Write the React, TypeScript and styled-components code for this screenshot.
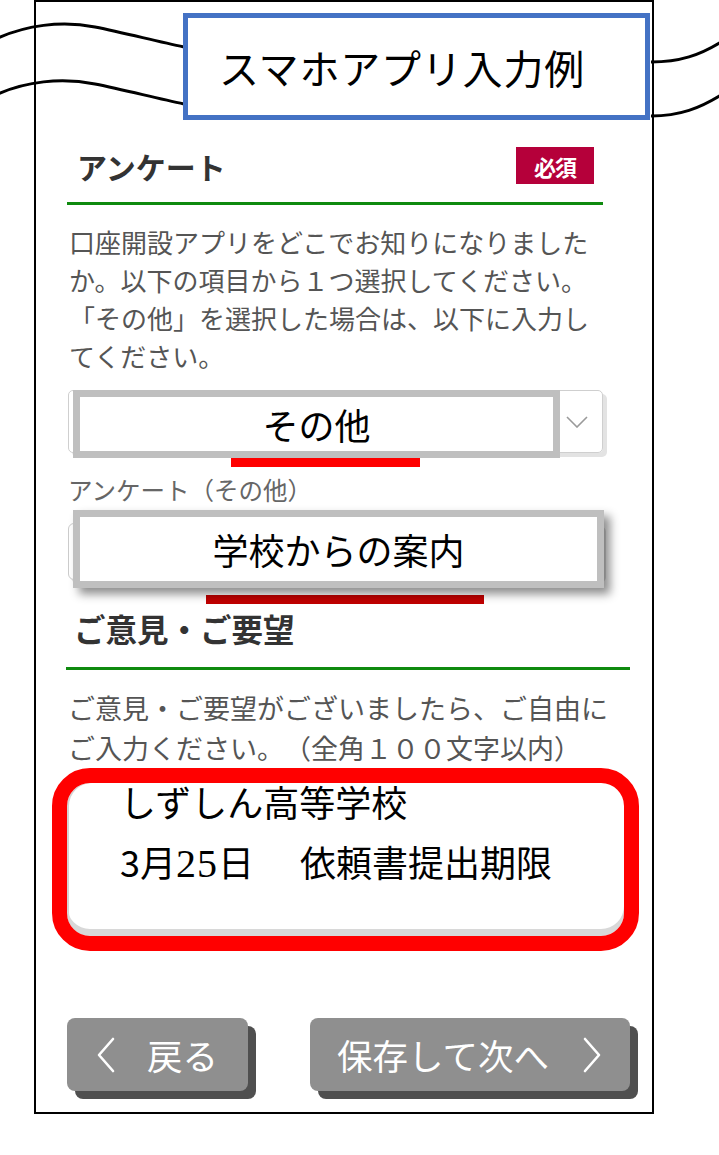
import React from "react";
import styled, { createGlobalStyle } from "styled-components";

const GlobalStyle = createGlobalStyle`
  html, body { margin: 0; padding: 0; background: #fff; }
  body { font-family: "Noto Sans CJK JP", "Noto Sans", sans-serif; }
  * { box-sizing: border-box; }
`;

const Page = styled.div`
  position: relative;
  width: 719px;
  height: 1155px;
  background: #fff;
  overflow: hidden;
`;

const Waves = styled.svg`
  position: absolute;
  left: 0;
  top: 0;
  width: 719px;
  height: 130px;
  pointer-events: none;
`;

const Frame = styled.div`
  margin-left: 34px;
  width: 620px;
  height: 1114px;
  border: 2px solid #000;
  display: flex;
  flex-direction: column;
`;

const TitleRow = styled.div`
  display: flex;
  padding-top: 11px;
  padding-left: 147px;
`;

const TitleBox = styled.div`
  position: relative;
  z-index: 1;
  width: 467px;
  height: 107px;
  border: 5px solid #4472c4;
  background: #fff;
  display: flex;
  align-items: center;
  padding-left: 31px;
  font-size: 40px;
  letter-spacing: 0.8px;
  line-height: 1;
  color: #000;
  white-space: nowrap;
`;

const Section = styled.section<{ $left: number; $width: number; $top: number }>`
  margin-left: ${(p) => p.$left}px;
  width: ${(p) => p.$width}px;
  margin-top: ${(p) => p.$top}px;
  display: flex;
  flex-direction: column;
`;

const HeadRow = styled.div<{ $padLeft: number }>`
  display: flex;
  justify-content: space-between;
  align-items: center;
  height: 37px;
  padding: 0 9px 0 ${(p) => p.$padLeft}px;
`;

const Heading = styled.h2<{ $size: number }>`
  margin: 0;
  font-size: ${(p) => p.$size}px;
  font-weight: 700;
  line-height: 1;
  color: #333;
  white-space: nowrap;
`;

const Badge = styled.span`
  width: 78px;
  height: 37px;
  background: #b5003a;
  color: #fff;
  font-size: 22px;
  font-weight: 700;
  display: flex;
  align-items: center;
  justify-content: center;
  letter-spacing: -1px;
`;

const Rule = styled.div<{ $top: number }>`
  margin-top: ${(p) => p.$top}px;
  height: 3px;
  background: #0f8a0f;
`;

const Body = styled.p<{ $size: number; $lh: number }>`
  margin: 18px 0 0;
  padding-left: 2px;
  font-size: ${(p) => p.$size}px;
  line-height: ${(p) => p.$lh}px;
  color: #555;
  text-spacing-trim: space-all;
`;

const FieldWrap = styled.div<{ $top: number; $height: number }>`
  position: relative;
  margin-top: ${(p) => p.$top}px;
  height: ${(p) => p.$height}px;
`;

const UnderSelect = styled.div`
  margin-left: 1px;
  width: 535px;
  height: 63px;
  border: 1px solid #cfcfcf;
  border-radius: 5px;
  box-shadow: 4px 4px 0 #e3e3e3;
  display: flex;
  justify-content: flex-end;
  align-items: center;
  padding-right: 14px;
`;

const UnderInput = styled.div`
  margin-top: 13px;
  margin-left: 1px;
  width: 535px;
  height: 57px;
  border: 1px solid #cccccc;
  border-radius: 6px;
  box-shadow: 3px 3px 0 #e0e0e0;
`;

const Callout = styled.div<{ $width: number; $height: number; $shadow?: boolean }>`
  position: absolute;
  left: 6px;
  top: 0;
  width: ${(p) => p.$width}px;
  height: ${(p) => p.$height}px;
  border: 7px solid #bfbfbf;
  background: #fff;
  display: flex;
  align-items: center;
  justify-content: center;
  font-size: 36px;
  line-height: 1;
  color: #000;
  white-space: nowrap;
  box-shadow: ${(p) => (p.$shadow ? "6px 6px 9px rgba(0,0,0,0.45)" : "none")};
`;

const Mark = styled.div<{ $left: number; $width: number; $top: number; $color: string }>`
  margin-top: ${(p) => p.$top}px;
  margin-left: ${(p) => p.$left}px;
  width: ${(p) => p.$width}px;
  height: 9px;
  background: ${(p) => p.$color};
`;

const SubLabel = styled.div`
  margin-top: 8px;
  padding-left: 1px;
  font-size: 24.5px;
  line-height: 30px;
  color: #666;
  white-space: nowrap;
  text-spacing-trim: space-all;
`;

const RedBox = styled.div`
  margin-left: -14px;
  width: 587px;
  height: 183px;
  border: 15px solid #ff0000;
  border-radius: 38px;
  background: #fff;
  overflow: hidden;
  box-shadow: inset 0 -7px 0 #d8d8d8, inset 2px 0 0 #d4d4d4;
  display: flex;
  flex-direction: column;
  gap: 24px;
  padding-left: 53px;
  font-size: 36px;
  line-height: 36px;
  color: #000;
`;

const MemoLine = styled.div`
  white-space: nowrap;
`;

const SerifNum = styled.span`
  font-family: "Liberation Serif", "DejaVu Serif", "Times New Roman", serif;
  font-size: 40px;
  letter-spacing: 1px;
`;

const Gap = styled.span`
  display: inline-block;
  width: 46px;
`;

const ButtonRow = styled.div`
  display: flex;
  margin-top: 67px;
  padding-left: 31px;
  gap: 62px;
`;

const NavButton = styled.button<{ $width: number; $gap: number; $padL: number; $padR: number; $spread?: boolean }>`
  width: ${(p) => p.$width}px;
  height: 73px;
  border: none;
  border-radius: 8px;
  background: #8f8f8f;
  box-shadow: 8px 8px 0 #4f4f4f;
  color: #fff;
  font-family: "Noto Sans CJK JP", sans-serif;
  font-size: 35.5px;
  line-height: 1;
  display: flex;
  align-items: center;
  justify-content: ${(p) => (p.$spread ? "space-between" : "flex-start")};
  gap: ${(p) => p.$gap}px;
  padding: 0 ${(p) => p.$padR}px 0 ${(p) => p.$padL}px;
  cursor: pointer;
  white-space: nowrap;
`;

const Chevron = ({ dir }: { dir: "left" | "right" }) => (
  <svg width="20" height="36" viewBox="0 0 20 36" style={{ flex: "none" }}>
    <polyline
      points={dir === "left" ? "17,2 3,18 17,34" : "3,2 17,18 3,34"}
      fill="none"
      stroke="#fff"
      strokeWidth="2.6"
      strokeLinecap="round"
      strokeLinejoin="round"
    />
  </svg>
);

export default function App() {
  return (
    <>
      <GlobalStyle />
      <Page>
        <Frame>
          <TitleRow>
            <TitleBox>スマホアプリ入力例</TitleBox>
          </TitleRow>

          <Section $left={31} $width={536} $top={27}>
            <HeadRow $padLeft={10}>
              <Heading $size={30}>アンケート</Heading>
              <Badge>必須</Badge>
            </HeadRow>
            <Rule $top={18} />
            <Body $size={26} $lh={38}>
              口座開設アプリをどこでお知りになりましたか。以下の項目から１つ選択してください。「その他」を選択した場合は、以下に入力してください。
            </Body>

            <FieldWrap $top={15} $height={68}>
              <UnderSelect>
                <svg width="22" height="12" viewBox="0 0 22 12">
                  <polyline points="1,1 11,11 21,1" fill="none" stroke="#9a9a9a" strokeWidth="1.6" />
                </svg>
              </UnderSelect>
              <Callout $width={487} $height={68}>その他</Callout>
            </FieldWrap>
            <Mark $top={0} $left={164} $width={189} $color="#ff0000" />

            <SubLabel>アンケート（その他）</SubLabel>
            <FieldWrap $top={5} $height={78}>
              <UnderInput />
              <Callout $width={531} $height={78} $shadow>学校からの案内</Callout>
            </FieldWrap>
            <Mark $top={7} $left={139} $width={278} $color="#c00000" />
          </Section>

          <Section $left={30} $width={564} $top={6}>
            <HeadRow $padLeft={8}>
              <Heading $size={31.5}>ご意見・ご要望</Heading>
            </HeadRow>
            <Rule $top={20} />
            <Body $size={27} $lh={40}>
              ご意見・ご要望がございましたら、ご自由にご入力ください。（全角１００文字以内）
            </Body>
            <RedBox>
              <MemoLine>しずしん高等学校</MemoLine>
              <MemoLine>
                3月<SerifNum>25</SerifNum>日<Gap />依頼書提出期限
              </MemoLine>
            </RedBox>
          </Section>

          <ButtonRow>
            <NavButton $width={181} $gap={31} $padL={29} $padR={0}>
              <Chevron dir="left" />
              <span>戻る</span>
            </NavButton>
            <NavButton $width={320} $gap={30} $padL={27} $padR={28} $spread>
              <span>保存して次へ</span>
              <Chevron dir="right" />
            </NavButton>
          </ButtonRow>
        </Frame>

        <Waves viewBox="0 0 719 130">
          <g fill="none" stroke="#000" strokeWidth="3">
            <path d="M -2,38 C 25,26 60,20 95,27 C 125,33 155,41 184,47" />
            <path d="M -2,94 C 25,82 60,77 95,84 C 125,90 155,98 184,104" />
            <path d="M 651,62 C 680,62 700,55 721,42" />
            <path d="M 651,116 C 680,116 700,108 721,95" />
          </g>
        </Waves>
      </Page>
    </>
  );
}
